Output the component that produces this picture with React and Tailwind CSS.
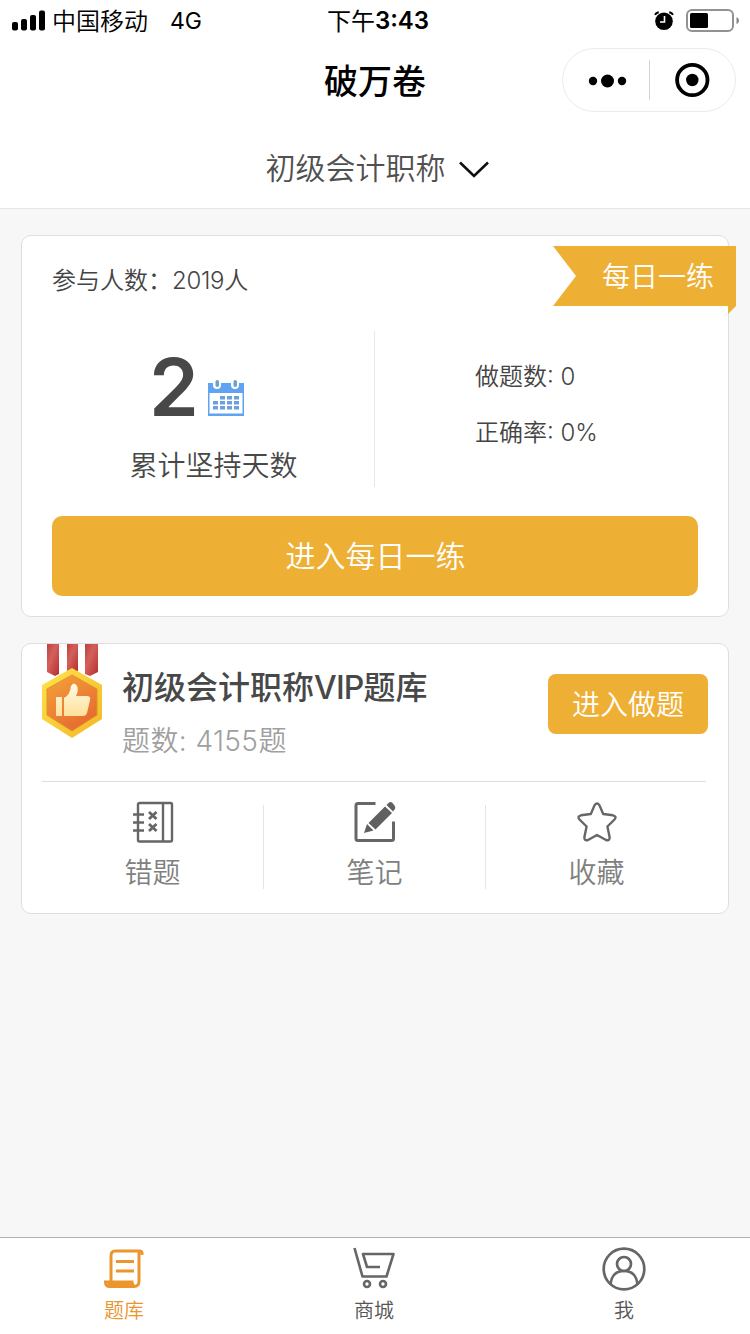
import React from 'react';

function StatusBar() {
  return (
    <div className="grid h-10 grid-cols-3 text-black">
      <div className="flex h-[42px] items-center pl-3">
        <svg width="34" height="22" viewBox="0 0 34 22" fill="#000">
          <rect x="0" y="12" width="6" height="8.500" rx="2" />
          <rect x="9" y="9" width="6" height="11.500" rx="2" />
          <rect x="18" y="5" width="6" height="15.500" rx="2" />
          <rect x="27" y="0.500" width="6" height="20" rx="2" />
        </svg>
        <span className="ml-[6px] pt-px text-[24px] font-[350] leading-none">中国移动</span>
        <span className="ml-[22px] text-[23px] leading-none">4G</span>
      </div>
      <div className="flex h-[42px] items-center justify-center pl-1.5 text-[24px] leading-none">
        <span className="pt-px">下午</span>
        <span className="font-semibold">3:43</span>
      </div>
      <div className="flex h-[42px] items-center justify-end pr-[10px]">
        <svg width="20" height="20" viewBox="0 0 20 20">
          <circle cx="10" cy="10.300" r="8.800" fill="#000" />
          <path d="M1 3.800Q2 1.600 4.800 1.200M15.200 1.200Q18 1.600 19 3.800" fill="none" stroke="#000" strokeWidth="2" />
          <path d="M10.500 5V11H6" fill="none" stroke="#fff" strokeWidth="1.600" />
        </svg>
        <svg className="ml-3" width="54" height="24" viewBox="0 0 54 24">
          <rect x="1" y="1" width="46" height="21" rx="5" fill="#fff" stroke="#929292" strokeWidth="2" />
          <rect x="4" y="4" width="18" height="15" rx="1.500" fill="#000" />
          <path d="M50.500 8Q53 9 53 11.500T50.500 15Z" fill="#858585" />
        </svg>
      </div>
    </div>
  );
}

function Header() {
  return (
    <header className="h-[209px] shrink-0 border-b border-[#e6e6e6] bg-white">
      <StatusBar />
      <div className="grid h-20 grid-cols-[188px_1fr_188px] items-center">
        <h1 className="col-start-2 pt-[3px] text-center text-[34px] font-medium leading-none text-black">破万卷</h1>
        <div className="flex h-16 w-[174px] items-center rounded-full border border-[#ebebeb]">
          <svg className="ml-[25px] mt-px" width="40" height="16" viewBox="0 0 40 16" fill="#000">
            <circle cx="5" cy="8" r="4.200" />
            <circle cx="19.500" cy="8" r="6.500" />
            <circle cx="34" cy="8" r="4.200" />
          </svg>
          <div className="ml-[21px] h-10 w-px bg-[#d3d3d3]" />
          <svg className="ml-6" width="36" height="36" viewBox="0 0 36 36">
            <circle cx="18.300" cy="18" r="15.200" fill="none" stroke="#000" strokeWidth="3.800" />
            <circle cx="18.300" cy="18" r="6.200" fill="#000" />
          </svg>
        </div>
      </div>
      <div className="flex h-24 items-center justify-center pl-[6px]">
        <span className="-ml-px text-[30px] font-[350] leading-none text-[#505050]">初级会计职称</span>
        <svg className="ml-3 mt-1" width="32" height="20" viewBox="0 0 32 20" fill="none" stroke="#111" strokeWidth="2.600">
          <path d="M2 2.500L16 16L30 2.500" />
        </svg>
      </div>
    </header>
  );
}

function Ribbon() {
  return (
    <div className="absolute -right-2 top-[10px] h-[68px] w-[184px]">
      <svg className="absolute inset-0" width="184" height="68" viewBox="0 0 184 68">
        <path d="M1 0H184V60H1L24 30Z" fill="#eeaf35" />
        <path d="M176 60H184L176 68Z" fill="#eeaf35" />
      </svg>
      <span className="relative flex h-[60px] items-center pl-[50px] pt-[2px] text-[28px] font-[350] leading-none text-white">每日一练</span>
    </div>
  );
}

const calendarCells = [
  [14, 17], [21, 17], [28, 17],
  [7, 22], [14, 22], [21, 22], [28, 22],
  [7, 27], [14, 27], [21, 27], [28, 27],
];

function CalendarIcon() {
  return (
    <svg width="36" height="36" viewBox="0 0 36 36">
      <rect y="3" width="36" height="33" fill="#5fa3f2" />
      <rect x="1.500" y="13" width="33" height="20.500" fill="#fff" />
      <path d="M5 0H13V5A4 4 0 0 1 5 5ZM23 0H31V5A4 4 0 0 1 23 5Z" fill="#fff" />
      <rect x="7.500" y="0" width="3.500" height="7" rx="1.700" fill="#6f9fce" />
      <rect x="25.500" y="0" width="3.500" height="7" rx="1.700" fill="#6f9fce" />
      {calendarCells.map(([x, y]) => (
        <rect key={`${x}-${y}`} x={x - 2} y={y - 1} width="5" height="3.500" fill="#6a9fe0" />
      ))}
    </svg>
  );
}

function DailyCard() {
  return (
    <section className="relative h-[382px] rounded-[10px] border border-[#dedede] bg-white px-[30px]">
      <Ribbon />
      <div className="flex h-[88px] items-center pt-px text-[24px] font-[350] leading-none text-[#444]">参与人数：<span className="tracking-[-0.3px]">2019人</span></div>
      <div className="flex h-[192px] pt-[7px]">
        <div className="w-[322px]">
          <div className="flex h-[85px] items-end pl-[97px]">
            <span className="-mb-[11px] w-[59px] text-[80px] font-semibold leading-[80px] text-[#484848]">2</span>
            <CalendarIcon />
          </div>
          <div className="mt-5 flex h-[60px] items-center justify-center pl-px text-[28px] font-[350] leading-none text-[#484848]">累计坚持天数</div>
        </div>
        <div className="h-[156px] w-px bg-[#e8e8e8]" />
        <div className="flex flex-col pl-[100px] pt-[18px] text-[24px] font-[350] leading-none text-[#444]">
          <div className="flex h-14 items-center whitespace-pre">做题数: 0</div>
          <div className="flex h-14 items-center whitespace-pre">正确率: 0%</div>
        </div>
      </div>
      <button className="flex h-20 w-[646px] items-center justify-center rounded-[10px] bg-[#eeaf35] pl-px text-[30px] font-[350] leading-none text-white">进入每日一练</button>
    </section>
  );
}

function MedalIcon() {
  return (
    <svg className="-ml-px shrink-0" width="62" height="94" viewBox="0 0 62 94">
      <defs>
        <linearGradient id="strap" x1="0" y1="0" x2="1" y2="1">
          <stop offset="0" stopColor="#b9433e" />
          <stop offset="0.4" stopColor="#d4605c" />
          <stop offset="1" stopColor="#b52f2d" />
        </linearGradient>
        <linearGradient id="rim" x1="0" y1="0" x2="1" y2="1">
          <stop offset="0" stopColor="#ffe34a" />
          <stop offset="1" stopColor="#f4b629" />
        </linearGradient>
        <linearGradient id="face" x1="0" y1="0" x2="0.6" y2="1">
          <stop offset="0" stopColor="#f4a33c" />
          <stop offset="1" stopColor="#e66b2f" />
        </linearGradient>
        <linearGradient id="thumb" x1="0" y1="0" x2="0" y2="1">
          <stop offset="0" stopColor="#fffbe6" />
          <stop offset="1" stopColor="#ffe09a" />
        </linearGradient>
      </defs>
      <path d="M6 0H18V30L14 32L6 28Z" fill="url(#strap)" />
      <path d="M26 0H37V27H26Z" fill="url(#strap)" />
      <path d="M44 0H57V28L49 32L44 30Z" fill="url(#strap)" />
      <path d="M31 24L61 41V75L31 94L1 75V41Z" fill="url(#rim)" />
      <path d="M31 31L56 45V71L31 87L6 71V45Z" fill="url(#face)" stroke="#dc9429" />
      <path d="M15 53H21V72H15ZM23 54Q29 51 30 42Q33 37 36 42Q38 46 35 52H47Q50 53 49 56L46 69Q45 72 42 72H23Z" fill="url(#thumb)" />
    </svg>
  );
}

function MistakeIcon() {
  return (
    <svg width="42" height="42" viewBox="0 0 42 42" fill="none" stroke="#666" strokeWidth="2.400">
      <rect x="6" y="2" width="34" height="38.500" rx="1.500" />
      <path d="M31 2V40M1 13.500H12M1 21.500H12M1 29.500H12" />
      <path d="M17 11L24.500 18M24.500 11L17 18M17 23L24.500 30M24.500 23L17 30" strokeWidth="2.800" />
    </svg>
  );
}

function NoteIcon() {
  return (
    <svg width="42" height="42" viewBox="0 0 42 42">
      <path d="M21.500 2.500H4Q2 2.500 2 4.500V37.500Q2 39.500 4 39.500H37.500Q39.500 39.500 39.500 37.500V20.500" fill="none" stroke="#666" strokeWidth="3" />
      <path d="M10 32L13 23L19.500 29.500ZM14.500 22L31 5.500L38 12L21.500 28.500ZM32.500 4L34.500 2Q36.500 0 38.500 2L40.500 4.500Q42 6.500 40.500 8.500L39 10.500Z" fill="#606060" />
    </svg>
  );
}

function StarIcon() {
  return (
    <svg width="42" height="42" viewBox="0 0 42 42" fill="none" stroke="#666" strokeWidth="2.400" strokeLinejoin="round">
      <path d="M18.600 4.100Q21 .8 23.400 4.100L27.200 13L37 14.300Q41.200 15.500 38.500 18.500L31.400 25.500L33.600 36Q34 40.300 30 39L21 34L12 39Q8 40.300 8.400 36L10.600 25.500L3.500 18.500Q.8 15.500 5 14.300L14.800 13Z" />
    </svg>
  );
}

function Action({ icon, label }) {
  return (
    <div className="flex w-[221px] flex-col items-center">
      {icon}
      <span className="mt-[16px] text-[28px] font-[350] leading-none text-[#808080]">{label}</span>
    </div>
  );
}

function BankCard() {
  return (
    <section className="mt-[26px] h-[271px] rounded-[10px] border border-[#dedede] bg-white pl-5">
      <div className="flex h-[138px] w-[664px] border-b border-[#ddd]">
        <MedalIcon />
        <div className="ml-[19px] w-[426px] shrink-0 pt-[28px]">
          <h2 className="text-[32px] font-medium leading-8 text-[#484848]">初级会计职称<span className="tracking-[-0.8px]">VIP</span>题库</h2>
          <p className="mt-[23px] whitespace-pre text-[28px] font-[350] leading-7 tracking-[0.4px] text-[#9f9f9f]">题数: 4155题</p>
        </div>
        <button className="mt-[30px] flex h-[60px] w-[160px] shrink-0 items-center justify-center rounded-[8px] bg-[#eeaf35] pt-0.5 text-[28px] font-[350] leading-none text-white">进入做题</button>
      </div>
      <div className="flex pt-[19px]">
        <Action icon={<MistakeIcon />} label="错题" />
        <div className="mt-1 h-[84px] w-px bg-[#e5e5e5]" />
        <Action icon={<NoteIcon />} label="笔记" />
        <div className="mt-1 h-[84px] w-px bg-[#e5e5e5]" />
        <Action icon={<StarIcon />} label="收藏" />
      </div>
    </section>
  );
}

function TabBar() {
  return (
    <nav className="grid h-[97px] shrink-0 grid-cols-3 border-t border-[#b2b2b2] bg-white pt-[9px] text-[20px] font-[350] leading-none text-[#555]">
      <div className="flex flex-col items-center pr-[2px] text-[#eb952c]">
        <svg width="42" height="44" viewBox="0 0 42 44" fill="none" stroke="currentColor" strokeWidth="3">
          <path d="M39 8V6Q39 4 36 4H12Q8 4 8 9V34" />
          <path d="M36 4V34Q36 39.500 31 39.500H7Q2.500 39.500 2.500 35H29Q29.500 39.500 32 39.500" />
          <path d="M29 37H5" strokeWidth="4" />
          <path d="M13 14.500H31M13 24H31" />
        </svg>
        <span className="mt-[10px]">题库</span>
      </div>
      <div className="flex flex-col items-center pr-[2px]">
        <svg width="42" height="44" viewBox="0 0 42 44" fill="none" stroke="#666" strokeWidth="2.600" strokeLinejoin="round">
          <path d="M1.500 1L9.500 29.500H33.500L40.500 7H10L14 20H27" />
          <circle cx="14" cy="37" r="3" />
          <circle cx="30" cy="37" r="3" />
        </svg>
        <span className="mt-[10px]">商城</span>
      </div>
      <div className="flex flex-col items-center pr-[2px]">
        <svg width="44" height="44" viewBox="0 0 44 44" fill="none" stroke="#666" strokeWidth="2.700">
          <circle cx="22" cy="22" r="20.300" />
          <circle cx="22" cy="17" r="7" />
          <path d="M8.500 37Q10 24 22 24T35.500 37" />
        </svg>
        <span className="mt-[10px]">我</span>
      </div>
    </nav>
  );
}

export default function App() {
  return (
    <div className="flex h-[1334px] w-[750px] flex-col overflow-hidden bg-[#f7f7f7] font-[Inter,'Noto_Sans_CJK_SC',sans-serif]">
      <Header />
      <main className="flex-1 px-[21px] pt-[26px]">
        <DailyCard />
        <BankCard />
      </main>
      <TabBar />
    </div>
  );
}
